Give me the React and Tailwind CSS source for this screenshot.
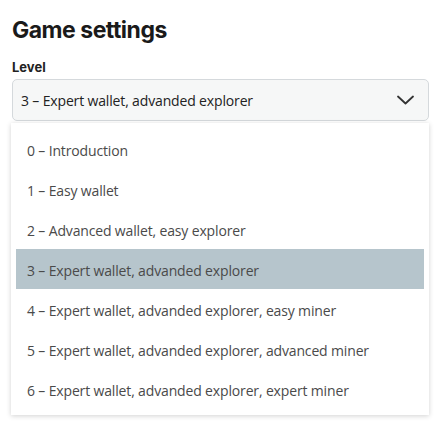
const levels = [
  '0 – Introduction',
  '1 – Easy wallet',
  '2 – Advanced wallet, easy explorer',
  '3 – Expert wallet, advanded explorer',
  '4 – Expert wallet, advanded explorer, easy miner',
  '5 – Expert wallet, advanded explorer, advanced miner',
  '6 – Expert wallet, advanded explorer, expert miner',
];

export default function App() {
  const selected = 3;

  return (
    <div className="w-[441px] h-[428px] bg-white px-3 pt-[13px]">
      {/* Header */}
      <h1 className="font-['Inter',sans-serif] text-[23px] leading-[34px] font-bold text-[#1a1a1a] tracking-[-0.5px]">
        Game settings
      </h1>
      <label className="block mt-[11px] font-['Inter',sans-serif] text-[13px] leading-[18px] font-bold text-[#222]">
        Level
      </label>

      {/* Select */}
      <div className="mt-[3px] h-[42px] flex items-center justify-between rounded-[5px] border border-[#d5d9dc] bg-[#f6f7f7] pl-2 pr-[14px] font-['Open_Sans',sans-serif] text-[14px] tracking-[-0.15px] text-[#222]">
        <span>{levels[selected]}</span>
        <svg width="17" height="10" viewBox="0 0 17 10" fill="none">
          <path d="M1 1.5 L8.5 8.5 L16 1.5" stroke="#333" strokeWidth="1.8" strokeLinecap="round" strokeLinejoin="round" />
        </svg>
      </div>

      {/* Dropdown */}
      <div className="mt-[2px] -ml-px py-[6px] px-[5px] bg-white shadow-[0_1px_5px_rgba(0,0,0,0.18)] font-['Open_Sans',sans-serif] text-[14px] tracking-[-0.15px] text-[#4a4a4a]">
        {levels.map((l, i) => (
          <div
            key={i}
            className={`h-10 flex items-center pl-[11px] pt-[2px] ${i === selected ? 'bg-[#b6c5cc]' : ''}`}
          >
            {l}
          </div>
        ))}
      </div>
    </div>
  );
}
